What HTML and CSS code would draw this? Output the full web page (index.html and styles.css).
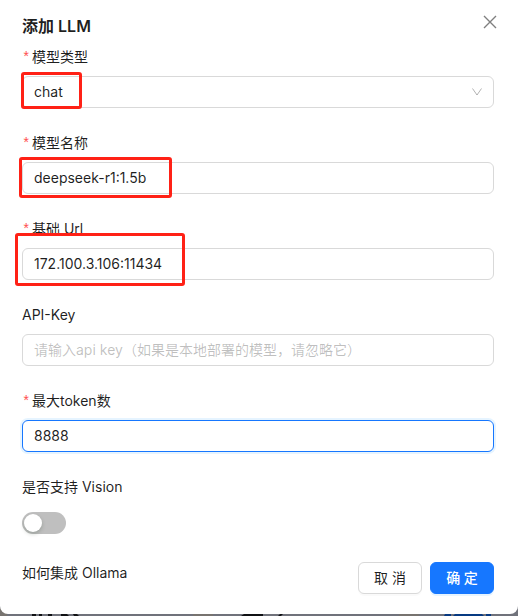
FILE: index.html
```html
<!DOCTYPE html>
<html lang="zh-CN">
<head>
  <meta charset="utf-8">
  <meta name="viewport" content="width=device-width, initial-scale=1">
  <title>添加 LLM</title>
  <link rel="stylesheet" href="styles.css">
</head>
<body>
  <main class="dialog" role="dialog" aria-labelledby="title">
    <header class="header">
      <h1 class="title" id="title">添加 LLM</h1>
      <button class="close" type="button" aria-label="关闭">
        <svg width="14" height="14" viewBox="0 0 14 14" fill="none" stroke="currentColor" stroke-width="1.4"><path d="M1 1 13 13M13 1 1 13"/></svg>
      </button>
    </header>
    <form>
      <div class="field">
        <label class="label required" for="type">模型类型</label>
        <div class="control">
          <select class="input select" id="type"><option>chat</option></select>
          <svg class="arrow" width="12" height="12" viewBox="0 0 12 12" fill="none" stroke="currentColor"><path d="M1.500 2.500 6 9 10.500 2.500"/></svg>
        </div>
        <span class="mark mark-type"></span>
      </div>
      <div class="field">
        <label class="label required" for="name">模型名称</label>
        <input class="input" id="name" type="text" value="deepseek-r1:1.5b">
        <span class="mark mark-name"></span>
      </div>
      <div class="field">
        <label class="label required" for="url">基础 Url</label>
        <input class="input" id="url" type="text" value="172.100.3.106:11434">
        <span class="mark mark-url"></span>
      </div>
      <div class="field">
        <label class="label" for="key">API-Key</label>
        <input class="input" id="key" type="text" placeholder="请输入api key（如果是本地部署的模型，请忽略它）">
      </div>
      <div class="field">
        <label class="label required" for="tokens">最大token数</label>
        <input class="input active" id="tokens" type="text" value="8888">
      </div>
      <div class="field">
        <label class="label" for="vision">是否支持 Vision</label>
        <div class="switch-row"><input class="switch" id="vision" type="checkbox" role="switch"></div>
      </div>
      <footer class="footer">
        <a class="help" href="#">如何集成 Ollama</a>
        <div class="actions">
          <button class="button" type="button">取 消</button>
          <button class="button primary" type="submit">确 定</button>
        </div>
      </footer>
    </form>
  </main>
  <svg class="backdrop" height="8" aria-hidden="true">
    <path fill="#77736f" d="M0 0h7v8H0zM193 0h20v8h-20zM399 0h20v8h-20z"/>
    <path fill="#101114" d="M32 6h4v2h-4zM39 6h3v2h-3zM48 6h4v2h-4zM61 6h6l2 2h-8zM73 6h4l2 2h-5zM244 6h19v2h-22zM280 6h3l-2 2h-3z"/>
    <path fill="#073a82" d="M445 6h6v2h-7zM455 6h27l2 2h-31zM486 6h5v2h-5z"/>
  </svg>
</body>
</html>
```
FILE: styles.css
```css
* {
  box-sizing: border-box;
}

body {
  margin: 0;
  background: #70727b;
  color: rgba(0, 0, 0, 0.88);
  font: 14px/22px Inter, "Noto Sans CJK SC", sans-serif;
  overflow: hidden;
}

button,
input,
select {
  font: inherit;
  color: inherit;
}

.dialog {
  position: relative;
  padding: 14px 24px 20px 22px;
  background: #fff;
  border-radius: 0 0 8px 8px;
}

.header {
  display: flex;
  justify-content: space-between;
  align-items: flex-start;
  margin-bottom: 8px;
}

.title {
  margin: 0;
  font-size: 16px;
  line-height: 24px;
  font-weight: 600;
}

.close {
  display: flex;
  margin: 1px -3px 0 0;
  padding: 0;
  border: 0;
  background: none;
  color: rgba(0, 0, 0, 0.5);
}

.field {
  position: relative;
  margin-bottom: 24px;
}

.label {
  display: block;
  height: 22px;
  margin-bottom: 8px;
}

.required::before {
  content: "*";
  display: inline-block;
  width: 7px;
  margin-right: 3px;
  color: #ff4d4f;
  font: 14px/14px "Liberation Mono", monospace;
}

.control {
  position: relative;
}

.input {
  display: block;
  width: 100%;
  height: 32px;
  padding: 3px 11px 5px;
  border: 1px solid #d9d9d9;
  border-radius: 6px;
  background: #fff;
  outline: 0;
}

.input::placeholder {
  color: rgba(0, 0, 0, 0.25);
  opacity: 1;
}

.select {
  appearance: none;
  padding: 4px 11px;
}

.arrow {
  position: absolute;
  top: 10px;
  right: 11px;
  color: rgba(0, 0, 0, 0.3);
  pointer-events: none;
}

.active {
  border-color: #1677ff;
  box-shadow: 0 0 0 2px rgba(5, 145, 255, 0.1);
}

/* Red highlight frames laid over the fields */
.mark {
  position: absolute;
  border: 3px solid #ff2116;
  border-radius: 3px;
  pointer-events: none;
}

.mark-type {
  top: 26px;
  left: -1px;
  width: 61px;
  height: 37px;
}

.mark-name {
  top: 25px;
  left: -3px;
  width: 153px;
  height: 41px;
}

.mark-url {
  top: 15px;
  left: -7px;
  width: 170px;
  height: 53px;
}

.switch-row {
  display: flex;
  height: 32px;
  padding-top: 6px;
}

.switch {
  appearance: none;
  width: 44px;
  height: 22px;
  margin: 0;
  padding: 2px;
  border-radius: 11px;
  background: #bfbfbf;
}

.switch::before {
  content: "";
  display: block;
  width: 18px;
  height: 18px;
  border-radius: 50%;
  background: #fff;
  box-shadow: 0 2px 4px rgba(0, 35, 11, 0.2);
}

.switch:checked {
  background: #1677ff;
}

.switch:checked::before {
  margin-left: auto;
}

.footer {
  display: flex;
  justify-content: space-between;
}

.help {
  color: inherit;
  text-decoration: none;
}

.actions {
  display: flex;
  gap: 8px;
}

.button {
  min-width: 64px;
  height: 32px;
  padding: 4px 14px;
  border: 1px solid #d9d9d9;
  border-radius: 6px;
  background: #fff;
  box-shadow: 0 2px 0 rgba(0, 0, 0, 0.02);
}

.primary {
  border-color: #1677ff;
  background: #1677ff;
  box-shadow: 0 2px 0 rgba(5, 145, 255, 0.1);
  color: #fff;
  font-weight: 500;
}

.backdrop {
  display: block;
  width: 100%;
  margin-top: -6px;
}
```
